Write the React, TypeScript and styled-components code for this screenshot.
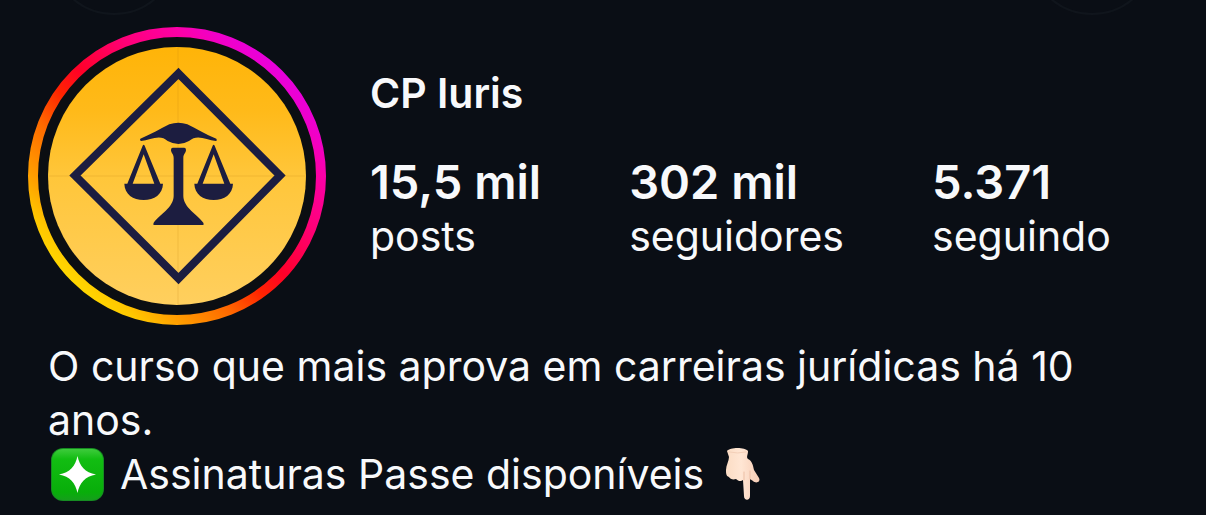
import React from "react";
import styled, { createGlobalStyle } from "styled-components";

const GlobalStyle = createGlobalStyle`
  *, *::before, *::after { box-sizing: border-box; }
  body {
    margin: 0;
    background: #0a0e15;
    color: #f8f9fb;
    font-family: Inter, "Liberation Sans", sans-serif;
  }
`;

const Page = styled.main`
  position: relative;
  overflow: hidden;
  padding: 27px 28px 12px;
`;

const FaintRing = styled.span<{ $side: "left" | "right" }>`
  position: absolute;
  top: -113px;
  ${({ $side }) => $side}: 50px;
  width: 128px;
  height: 128px;
  border: 2px solid #10151c;
  border-radius: 50%;
`;

const Header = styled.header`
  display: flex;
  gap: 44px;
`;

const AvatarLink = styled.a`
  display: block;
  flex: none;
  width: 298px;
  height: 298px;
`;

const Summary = styled.div`
  flex: 1;
  padding-top: 40px;
`;

const Name = styled.h1`
  margin: 0 0 35px;
  font-size: 41px;
  line-height: 52px;
  font-weight: 600;
`;

const Stats = styled.ul`
  display: flex;
  gap: 88px;
  margin: 0;
  padding: 0;
  list-style: none;
`;

const StatLink = styled.a`
  display: block;
  color: inherit;
  text-decoration: none;
  white-space: nowrap;
`;

const StatValue = styled.strong`
  display: block;
  font-size: 47px;
  line-height: 56px;
  font-weight: 600;
`;

const StatLabel = styled.span`
  display: block;
  font-size: 41px;
  line-height: 52px;
`;

const Bio = styled.section`
  padding: 14px 20px 0;
  font-size: 41px;
  line-height: 54px;
`;

const BioText = styled.p`
  margin: 0;
`;

const BioLine = styled.p`
  display: flex;
  align-items: center;
  margin: 0;
  gap: 16px;
`;

const Emoji = styled.svg`
  display: block;
  flex: none;
  width: 56px;
  height: 54px;
`;

const stats = [
  { value: "15,5 mil", label: "posts" },
  { value: "302 mil", label: "seguidores" },
  { value: "5.371", label: "seguindo" },
];

function ScalePan({ x }: { x: number }) {
  return (
    <path
      transform={`translate(${x} 0)`}
      fillRule="evenodd"
      d="M98 107Q101 102 104 107L151 221H159C158 253 133 270 101 270S44 253 43 221H52ZM101 133L68 221H133Z"
    />
  );
}

function Avatar() {
  return (
    <svg width="298" height="298" viewBox="0 0 298 298" aria-hidden="true">
      <defs>
        <linearGradient id="story" gradientUnits="userSpaceOnUse" x1="44" y1="254" x2="254" y2="44">
          <stop offset="0" stopColor="#ffd600" />
          <stop offset="0.06" stopColor="#ffc800" />
          <stop offset="0.15" stopColor="#ffa000" />
          <stop offset="0.3" stopColor="#ff6a00" />
          <stop offset="0.42" stopColor="#ff2400" />
          <stop offset="0.52" stopColor="#ff0028" />
          <stop offset="0.7" stopColor="#ff0078" />
          <stop offset="0.85" stopColor="#fc00a8" />
          <stop offset="0.93" stopColor="#f000c8" />
          <stop offset="1" stopColor="#e800dc" />
        </linearGradient>
        <linearGradient id="disc" x1="0" y1="0" x2="0" y2="1">
          <stop offset="0" stopColor="#ffb408" />
          <stop offset="0.25" stopColor="#ffba1a" />
          <stop offset="0.5" stopColor="#ffc63a" />
          <stop offset="1" stopColor="#ffcf5e" />
        </linearGradient>
      </defs>
      <circle cx="149" cy="149" r="144" fill="#0b0e12" stroke="url(#story)" strokeWidth="10" />
      <circle cx="149" cy="149" r="129" fill="url(#disc)" />
      <path d="M20 149H278M150 20V278" stroke="#b87a10" strokeOpacity="0.2" />
      <path d="M150.500 46.500L252 148.500L150.500 251.500L47 148.500Z" fill="none" stroke="#1c1d40" strokeWidth="8" />
      <g transform="translate(82 83) scale(0.3333)" fill="#1c1d40">
        <path d="M91 86C125 72 150 57 178 43Q205 33 232 43C260 57 286 73 319 86Q323 91 318 93C288 89 261 71 237 93Q206 111 173 93C151 71 122 89 93 93Q88 90 91 86Z" />
        <path d="M188 113H223Q229 114 228 121C227 130 220 132 220 144V258C220 292 263 315 280 338Q283 345 279 345H132Q128 345 131 338C148 315 191 292 191 258V144C191 132 184 130 183 121Q182 114 188 113Z" />
        <ScalePan x={0} />
        <ScalePan x={210} />
      </g>
    </svg>
  );
}

function SparkleEmoji() {
  return (
    <Emoji viewBox="0 0 56 54" role="img" aria-label="Brilho">
      <defs>
        <linearGradient id="green" x1="0" y1="0" x2="0" y2="1">
          <stop offset="0" stopColor="#3ecb3c" />
          <stop offset="0.2" stopColor="#12bd12" />
          <stop offset="0.85" stopColor="#08ae0a" />
          <stop offset="1" stopColor="#159f1b" />
        </linearGradient>
      </defs>
      <rect x="3" y="1" width="53" height="53" rx="12" fill="#168c22" />
      <rect x="4" y="2" width="51" height="51" rx="11" fill="url(#green)" />
      <path d="M29.500 9C31.500 19 37 25.500 48 27.500C37 29.500 31.500 36 29.500 46C27.500 36 22 29.500 11 27.500C22 25.500 27.500 19 29.500 9Z" fill="#fff" />
    </Emoji>
  );
}

function PointingDownEmoji() {
  return (
    <Emoji viewBox="6 -1 56 54" role="img" aria-label="Aponta para baixo">
      <defs>
        <linearGradient id="skin" x1="0" y1="0" x2="1" y2="0">
          <stop offset="0" stopColor="#fbdcc4" />
          <stop offset="0.45" stopColor="#ffe6d4" />
          <stop offset="1" stopColor="#f7cdb6" />
        </linearGradient>
      </defs>
      <path
        d="M13 3C16 -1 31 -1 34 3C34 7 32 9 34 11C38 13 39 17 40 22L45 30C47 34 42 36 39 33L36 31L36 48C36 53 30 53 30 48L29 32C27 34 24 33 22 31C19 32 16 31 15 29C12 28 12 25 12 22C12 17 15 13 15 9Z"
        fill="url(#skin)"
      />
      <path d="M15 4Q24 6 32 4" fill="none" stroke="#f3cfb8" strokeLinecap="round" />
      <path d="M30 32V24M36 31V23" fill="none" stroke="#ecbfa6" strokeLinecap="round" />
    </Emoji>
  );
}

export default function App() {
  return (
    <>
      <GlobalStyle />
      <Page>
        <FaintRing $side="left" />
        <FaintRing $side="right" />
        <Header>
          <AvatarLink href="#story" aria-label="CP Iuris">
            <Avatar />
          </AvatarLink>
          <Summary>
            <Name>CP Iuris</Name>
            <Stats>
              {stats.map(({ value, label }) => (
                <li key={label}>
                  <StatLink href={`#${label}`}>
                    <StatValue>{value}</StatValue>
                    <StatLabel>{label}</StatLabel>
                  </StatLink>
                </li>
              ))}
            </Stats>
          </Summary>
        </Header>
        <Bio>
          <BioText>O curso que mais aprova em carreiras jurídicas há 10 anos.</BioText>
          <BioLine>
            <SparkleEmoji />
            <span>Assinaturas Passe disponíveis</span>
            <PointingDownEmoji />
          </BioLine>
        </Bio>
      </Page>
    </>
  );
}
